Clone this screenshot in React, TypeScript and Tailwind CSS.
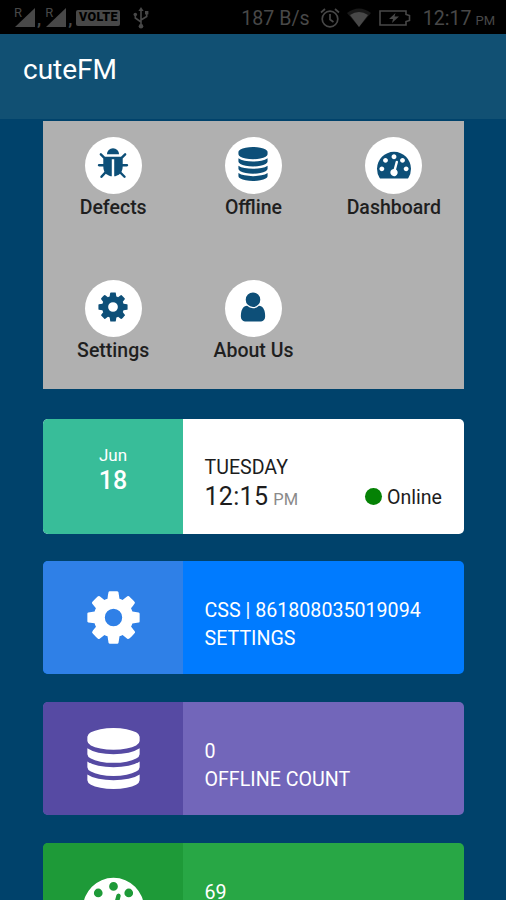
import type { ReactNode } from "react";

const COG =
  "M1152 896q0-106-75-181t-181-75-181 75-75 181 75 181 181 75 181-75 75-181zm512-109v222q0 12-8 23t-20 13l-185 28q-19 54-39 91 35 50 107 138 10 12 10 25t-9 23q-27 37-99 108t-94 71q-12 0-26-9l-138-108q-44 23-91 38-16 136-29 186-7 28-36 28h-222q-14 0-24.5-8.5t-11.5-21.5l-28-184q-49-16-90-37l-141 107q-10 9-25 9-14 0-25-11-126-114-165-168-7-10-7-23 0-12 8-23 15-21 51-66.5t54-70.5q-27-50-41-99l-183-27q-13-2-21-12.5t-8-23.5v-222q0-12 8-23t19-13l186-28q14-46 39-92-40-57-107-138-10-12-10-24 0-10 9-23 26-36 98.5-107.5t94.5-71.5q13 0 26 10l138 107q44-23 91-38 16-136 29-186 7-28 36-28h222q14 0 24.5 8.5t11.5 21.5l28 184q49 16 90 37l142-107q9-9 24-9 13 0 25 10 129 119 165 170 7 8 7 22 0 12-8 23-15 21-51 66.5t-54 70.5q26 50 41 98l183 28q13 2 21 12.5t8 23.5z";
const GAUGE =
  "M384 1152q0-53-37.5-90.5t-90.5-37.5-90.5 37.5-37.5 90.5 37.5 90.5 90.5 37.5 90.5-37.5 37.5-90.5zm192-448q0-53-37.5-90.5t-90.5-37.5-90.5 37.5-37.5 90.5 37.5 90.5 90.5 37.5 90.5-37.5 37.5-90.5zm428 481l101-382q6-26-7.5-48.5t-38.5-29.5-48 6.5-30 39.5l-101 382q-60 5-107 43.5t-63 98.5q-20 77 20 146t117 89 146-20 89-117q16-60-6-117t-72-91zm660-33q0-53-37.5-90.5t-90.5-37.5-90.5 37.5-37.5 90.5 37.5 90.5 90.5 37.5 90.5-37.5 37.5-90.5zm-640-640q0-53-37.5-90.5t-90.5-37.5-90.5 37.5-37.5 90.5 37.5 90.5 90.5 37.5 90.5-37.5 37.5-90.5zm448 192q0-53-37.5-90.5t-90.5-37.5-90.5 37.5-37.5 90.5 37.5 90.5 90.5 37.5 90.5-37.5 37.5-90.5zm320 448q0 261-141 483-19 29-54 29h-1402q-35 0-54-29-141-221-141-483 0-182 71-348t191-286 286-191 348-71 348 71 286 191 191 286 71 348z";
const DATABASE =
  "M896 768q237 0 443-43t325-127v170q0 69-103 128t-280 93.5-385 34.5-385-34.5-280-93.5-103-128v-170q119 84 325 127t443 43zm0 768q237 0 443-43t325-127v170q0 69-103 128t-280 93.5-385 34.5-385-34.5-280-93.5-103-128v-170q119 84 325 127t443 43zm0-384q237 0 443-43t325-127v170q0 69-103 128t-280 93.5-385 34.5-385-34.5-280-93.5-103-128v-170q119 84 325 127t443 43zm0-1152q208 0 385 34.5t280 93.5 103 128v128q0 69-103 128t-280 93.5-385 34.5-385-34.5-280-93.5-103-128v-128q0-69 103-128t280-93.5 385-34.5z";
const BUG =
  "M1696 960q0 26-19 45t-45 19h-224q0 171-67 290l208 209q19 19 19 45t-19 45q-18 19-45 19t-45-19l-198-197q-5 5-15 13t-42 28.5-65 36.5-82 29-97 13v-896h-128v896q-51 0-101.5-13.5t-87-33-66-39-43.5-32.5l-15-14-183 207q-20 21-48 21-24 0-43-16-19-18-20.5-44.5t15.5-46.5l202-227q-58-114-58-274h-224q-26 0-45-19t-19-45 19-45 45-19h224v-294l-173-173q-19-19-19-45t19-45 45-19 45 19l173 173h844l173-173q19-19 45-19t45 19 19 45-19 45l-173 173v294h224q26 0 45 19t19 45zm-480-576h-640q0-133 93.5-226.5t226.5-93.5 226.5 93.5 93.5 226.5z";
const USER =
  "M1536 1399q0 109-62.5 187t-150.5 78h-854q-88 0-150.5-78t-62.5-187q0-85 8.5-160.5t31.5-152 58.5-131 94-89 134.5-34.5q131 128 313 128t313-128q76 0 134.5 34.5t94 89 58.5 131 31.5 152 8.5 160.5zm-256-887q0 159-112.5 271.5t-271.5 112.5-271.5-112.5-112.5-271.5 112.5-271.5 271.5-112.5 271.5 112.5 112.5 271.5z";

function Glyph({ d, className }: { d: string; className: string }) {
  return (
    <svg viewBox="0 0 1792 1792" fill="currentColor" className={`block shrink-0 overflow-visible ${className}`}>
      <path d={d} />
    </svg>
  );
}

function Signal() {
  return (
    <div className="flex h-5 items-start">
      <span className="text-[13px] leading-[10px]">R</span>
      <svg viewBox="0 0 19 19" className="-ml-[7px] h-[19px] w-[20px]" fill="currentColor" preserveAspectRatio="none">
        <path d="M19 0V19H0Z" />
      </svg>
      <span className="ml-[2px] self-end text-[17px] font-bold leading-[17px]">,</span>
    </div>
  );
}

function StatusBar() {
  return (
    <div className="flex h-[34px] shrink-0 items-center justify-between bg-black pl-[14px] pr-[11px] pt-px text-[#484848]">
      <div className="flex items-center">
        <Signal />
        <div className="ml-[4px]">
          <Signal />
        </div>
        <span className="ml-[4px] flex h-[16px] w-[44px] items-center justify-center rounded-[2px] bg-[#484848] text-[12.5px] font-black leading-none tracking-[0.3px] text-black">
          VOLTE
        </span>
        <svg viewBox="0 0 16 22" className="ml-[13px] h-[22px] w-[16px]" fill="none" stroke="currentColor" strokeWidth="1.6">
          <path d="M8 2V19M8 15L2.3 11V8M8 13L13.7 9.5V6" />
          <path d="M8 0l2.6 4H5.4Z" fill="currentColor" stroke="none" />
          <circle cx="8" cy="19.3" r="2.3" fill="currentColor" stroke="none" />
          <circle cx="2.3" cy="7.5" r="1.8" fill="currentColor" stroke="none" />
          <path d="M12 4h3.4v3.4H12z" fill="currentColor" stroke="none" />
        </svg>
      </div>
      <div className="flex items-center">
        <span className="mt-[2px] text-[19.600px] leading-none">187 B/s</span>
        <svg viewBox="0 0 20 20" className="ml-[10px] h-5 w-5" fill="none" stroke="currentColor" strokeWidth="1.7">
          <circle cx="10" cy="11" r="7.8" />
          <path d="M10 6v5.5l3.5 2.5M1 4.5L5 1M19 4.5L15 1" />
        </svg>
        <svg viewBox="0 0 24 19" className="ml-[7px] h-[19px] w-6" fill="currentColor">
          <path d="M0 5Q12-4 24 5L12 19Z" opacity="0.35" />
          <path d="M3 7Q12 1 21 7L12 19Z" />
        </svg>
        <svg viewBox="0 0 32 16" className="ml-[8px] h-4 w-8" fill="none" stroke="currentColor" strokeWidth="1.6">
          <path d="M1 1h26v3.5l3.500 1v5l-3.500 1V15H1Z" />
          <path d="M16.500 3L10 9h4l-1 4 7-6.500h-4.500Z" fill="currentColor" stroke="none" />
        </svg>
        <span className="ml-[12px] mt-[2px] text-[19.600px] leading-none">12:17</span>
        <span className="ml-[4px] mt-[6px] text-[13px] leading-none">PM</span>
      </div>
    </div>
  );
}

function MenuItem({ icon, label }: { icon: string; label: string }) {
  return (
    <div className="flex flex-col items-center">
      <div className="flex h-[57px] w-[57px] items-center justify-center rounded-full bg-white pb-[3px] text-[#0d4f78]">
        <Glyph d={icon} className="h-[34px] w-[34px]" />
      </div>
      <span className="whitespace-nowrap text-[19.500px] font-medium leading-[28px] text-[#1f1f1f]">{label}</span>
    </div>
  );
}

function Tile({
  icon,
  left,
  right,
  children,
}: {
  icon: string;
  left: string;
  right: string;
  children: ReactNode;
}) {
  return (
    <div className={`flex h-[113px] shrink-0 overflow-hidden rounded-[5px] text-white ${right}`}>
      <div className={`flex w-[140px] items-center justify-center ${left}`}>
        <Glyph d={icon} className="h-[61px] w-[61px]" />
      </div>
      <div className="flex flex-col pl-[21.500px] pt-[36px] text-[19.650px] leading-[28px]">{children}</div>
    </div>
  );
}

export default function App() {
  return (
    <div className="flex h-[900px] w-[506px] flex-col overflow-hidden bg-[#00426b] font-['Roboto',sans-serif]">
      <StatusBar />
      <header className="h-[85px] shrink-0 bg-[#115073] pl-[23px] pt-[18px] text-[28px] leading-[36px] text-white">
        cuteFM
      </header>
      <main className="flex flex-col pl-[43px] pr-[42px] pt-[2px]">
        <div className="grid h-[267.500px] shrink-0 grid-cols-3 grid-rows-[143.5px_1fr] bg-[#b0b0b0] pt-[15.500px]">
          <MenuItem icon={BUG} label="Defects" />
          <MenuItem icon={DATABASE} label="Offline" />
          <MenuItem icon={GAUGE} label="Dashboard" />
          <MenuItem icon={COG} label="Settings" />
          <MenuItem icon={USER} label="About Us" />
        </div>

        <div className="mt-[30.500px] flex h-[115px] shrink-0 overflow-hidden rounded-[5px] bg-white">
          <div className="flex w-[140px] flex-col items-center bg-[#38bd99] pt-[24px] text-white">
            <span className="text-[17px] leading-[24px]">Jun</span>
            <span className="text-[25px] font-medium leading-[28px]">18</span>
          </div>
          <div className="flex flex-1 flex-col pl-[21.500px] pr-[22px] pt-[35px] text-[#1d1d1d]">
            <span className="text-[19.600px] leading-[28px]">TUESDAY</span>
            <div className="flex items-center justify-between pt-px">
              <div className="flex items-baseline">
                <span className="text-[25px] leading-[28px] tracking-[0.300px]">12:15</span>
                <span className="ml-[5px] text-[16.500px] text-[#8a8a8a]">PM</span>
              </div>
              <div className="flex items-center text-[19.600px] leading-[28px]">
                <span className="mb-[2px] mr-[5px] h-[17px] w-[17px] rounded-full bg-[#058205]" />
                Online
              </div>
            </div>
          </div>
        </div>

        <div className="mt-[27px] flex flex-col gap-[28px]">
          <Tile icon={COG} left="bg-[#2f80e7]" right="bg-[#007bff]">
            <span>CSS | 861808035019094</span>
            <span>SETTINGS</span>
          </Tile>
          <Tile icon={DATABASE} left="bg-[#564aa3]" right="bg-[#7266ba]">
            <span>0</span>
            <span>OFFLINE COUNT</span>
          </Tile>
          <Tile icon={GAUGE} left="bg-[#1e9a38]" right="bg-[#28a745]">
            <span>69</span>
          </Tile>
        </div>
      </main>
    </div>
  );
}
